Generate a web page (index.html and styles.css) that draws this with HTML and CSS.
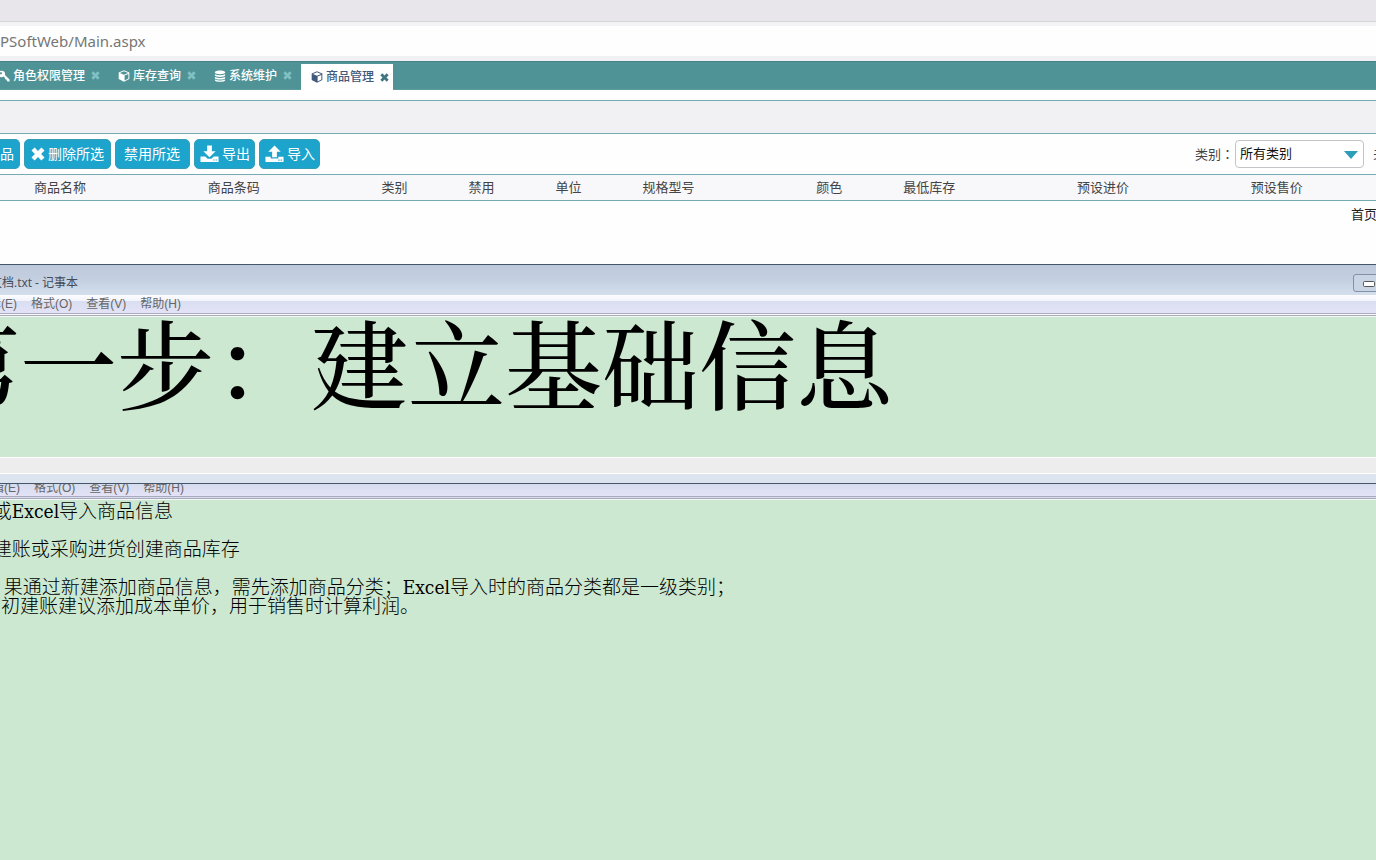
FILE: index.html
```html
<!DOCTYPE html>
<html lang="zh-CN">
<head>
<meta charset="utf-8">
<title>商品管理</title>
<link rel="stylesheet" href="styles.css">
</head>
<body>
<svg class="sprite" aria-hidden="true">
  <symbol id="cube" viewBox="0 0 14 14"><path fill-rule="evenodd" d="M7 .4 13.2 2.8V10.6L7 13.8.8 10.6V2.8ZM7 1.6 2.2 3.5 7 5.4 11.8 3.5ZM7.7 12.2 12.1 9.9V4.7L7.7 6.5Z"/></symbol>
  <symbol id="cross" viewBox="0 0 14 14"><path d="M3.6.5 7 3.9 10.4.5 13.5 3.6 10.1 7 13.5 10.4 10.4 13.5 7 10.1 3.6 13.5.5 10.4 3.9 7 .5 3.6Z"/></symbol>
</svg>

<div class="browser-strip"></div>
<div class="address-bar"><span class="address">PSoftWeb/Main.aspx</span></div>

<nav class="tabs">
  <button class="tab tab-first"><svg class="tab-icon" viewBox="0 0 14 14"><path fill-rule="evenodd" d="M4.5.8a3.8 3.8 0 0 1 3.6 5l5.4 5.2v2.3h-2.4l-.9-1v-1.2H9L8.300 10.400V9.200L6.300 7.700A3.800 3.800 0 1 1 4.500.8ZM3.400 2.500a1.200 1.200 0 1 0 .1 0Z"/></svg>角色权限管理<svg class="tab-close"><use href="#cross"/></svg></button>
  <button class="tab"><svg class="tab-icon"><use href="#cube"/></svg>库存查询<svg class="tab-close"><use href="#cross"/></svg></button>
  <button class="tab"><svg class="tab-icon" viewBox="0 0 14 14"><path d="M1 2.500C1-.1 13-.1 13 2.500V3.300C13 5.500 1 5.500 1 3.300ZM1 5Q7 7.300 13 5V6.500C13 8.700 1 8.700 1 6.500ZM1 8.200Q7 10.500 13 8.200V9.500C13 11.700 1 11.700 1 9.500ZM1 11.200Q7 13.500 13 11.200V12C13 14.400 1 14.400 1 12Z"/></svg>系统维护<svg class="tab-close"><use href="#cross"/></svg></button>
  <button class="tab tab-active"><svg class="tab-icon"><use href="#cube"/></svg>商品管理<svg class="tab-close"><use href="#cross"/></svg></button>
</nav>

<main class="page">
  <div class="band"></div>
  <div class="toolbar">
    <button class="btn btn-cut">品</button>
    <button class="btn"><svg class="btn-x"><use href="#cross"/></svg>删除所选</button>
    <button class="btn btn-plain">禁用所选</button>
    <button class="btn btn-file"><svg class="btn-icon" viewBox="0 0 20 18"><path d="M7.500 0h5v6h4L10 12.500 3.500 6h4Z"/><path fill-rule="evenodd" d="M.5 11.500h5L8 14h4l2.500-2.500h5V17.500H.5ZM14 14.700v1.200h1.300v-1.200ZM16.500 14.700v1.200h1.300v-1.200Z"/></svg>导出</button>
    <button class="btn btn-file"><svg class="btn-icon" viewBox="0 0 20 18"><path d="M7.500 12.500h5V6.500h4L10 0 3.500 6.500h4Z"/><path fill-rule="evenodd" d="M.5 12h5.500v1.800h8V12h5.500V17.500H.5ZM14 14.900v1.200h1.300v-1.200ZM16.500 14.900v1.200h1.300v-1.200Z"/></svg>导入</button>
    <div class="filter">
      <label for="category">类别<span lang="zh-TW">：</span></label>
      <div class="select-box">
        <select id="category"><option>所有类别</option></select>
        <svg class="arrow" viewBox="0 0 14 8"><path d="M0 0h14L7 8Z"/></svg>
      </div>
      <span class="keyword">关</span>
    </div>
  </div>
  <table class="goods">
    <colgroup><col class="c-lead"><col class="c-wide"><col class="c-wide"><col class="c-slim"><col class="c-slim"><col class="c-slim"><col class="c-wide"><col class="c-slim"><col class="c-wide"><col class="c-wide"><col></colgroup>
    <thead><tr><td></td><th>商品名称</th><th>商品条码</th><th>类别</th><th>禁用</th><th>单位</th><th>规格型号</th><th>颜色</th><th>最低库存</th><th>预设进价</th><th>预设售价</th></tr></thead>
  </table>
  <div class="pager"><a href="#">首页</a></div>
</main>

<section class="notepad">
  <header class="titlebar"><span class="title">文档.txt - 记事本</span><button class="minimize" aria-label="最小化"><svg viewBox="0 0 12 6"><rect x=".5" y=".5" width="11" height="5" rx="1"/></svg></button></header>
  <nav class="menu"><button>编辑(E)</button><button>格式(O)</button><button>查看(V)</button><button>帮助(H)</button></nav>
  <textarea class="editor headline" aria-label="标题" spellcheck="false">第一步：建立基础信息</textarea>
  <div class="status"></div>
</section>

<section class="notepad notepad-notes">
  <nav class="menu menu-low"><button>编辑(E)</button><button>格式(O)</button><button>查看(V)</button><button>帮助(H)</button></nav>
  <textarea class="editor notes" aria-label="说明" spellcheck="false">  或Excel导入商品信息

  建账或采购进货创建商品库存

    果通过新建添加商品信息，需先添加商品分类；Excel导入时的商品分类都是一级类别；
期初建账建议添加成本单价，用于销售时计算利润。</textarea>
</section>
</body>
</html>
```
FILE: styles.css
```css
* { box-sizing: border-box; }

body {
  margin: 0;
  min-height: 100vh;
  display: flex;
  flex-direction: column;
  overflow: hidden;
  background: #fff;
  color: #444;
  font: 13px/18px "Liberation Sans", "Noto Sans CJK SC", sans-serif;
}

button, select, textarea { font: inherit; color: inherit; margin: 0; border: 0; padding: 0; background: none; }
button, label, th, a, .title, .keyword { white-space: nowrap; }
.sprite { display: none; }

.browser-strip { height: 22px; background: #e8e6ea; border-bottom: 1px solid #d5d4d8; }
.address-bar {
  height: 39px;
  display: flex;
  align-items: center;
  border-top: 4px solid #f3f2f5;
  border-bottom: 5px solid #f1f0f2;
  background: #fefefe;
}
.address { font: 15px/20px "Noto Sans", "Open Sans", sans-serif; color: #767676; }

.tabs {
  height: 29px;
  display: flex;
  background: #4f9397;
  border-top: 1px solid #478286;
  border-bottom: 1px solid #5f9c9f;
}
.tab {
  display: flex;
  align-items: center;
  padding: 0 8px 0 10px;
  font-size: 12px;
  font-weight: 500;
  color: #fff;
}
.tab-first { margin-left: -12px; }
.tab-icon { width: 12px; height: 12px; margin-right: 3px; fill: currentColor; }
.tab-close { width: 9px; height: 9px; margin-left: 6px; fill: #7fc0c2; }
.tab-active { margin: 2px 0 -1px 1px; padding: 0 4px 0 10px; background: #fff; color: #40587c; }
.tab-active .tab-close { fill: #41757f; }

.page { height: 174px; padding-top: 10px; background: #fefefe; }
.band { height: 33px; background: #f1f0f2; border-top: 1px solid #75acb3; }
.toolbar {
  height: 41px;
  display: flex;
  align-items: center;
  gap: 4px;
  overflow: hidden;
  border-top: 1px solid #75acb3;
}
.btn {
  display: flex;
  align-items: center;
  gap: 3px;
  height: 30px;
  padding: 0 6px;
  border: 1px solid #369db5;
  border-radius: 5px;
  background: #1da4cd;
  color: #fff;
  font-size: 14px;
}
.btn-cut { padding: 0 5px 0 0; border-left: 0; border-radius: 0 5px 5px 0; }
.btn-plain { padding: 0 9px 0 8px; }
.btn-file { padding: 0 4px 0 5px; }
.btn-x { width: 14px; height: 14px; fill: #fff; }
.btn-icon { width: 19px; height: 18px; fill: #fff; }
.filter { display: flex; align-items: center; gap: 4px; margin: 0 -10px 0 auto; }
.filter label { margin-right: -3px; }
.filter label span { font-family: "Noto Sans CJK TC", sans-serif; }
.select-box { position: relative; width: 129px; height: 28px; }
.select-box select {
  width: 100%;
  height: 100%;
  padding: 0 24px 0 4px;
  appearance: none;
  border: 1px solid #c4c4c8;
  border-radius: 4px;
  background: #fff;
  color: #111;
}
.arrow { position: absolute; right: 6px; top: 11px; width: 14px; height: 8px; fill: #2b9fb9; pointer-events: none; }
.keyword { margin-left: 5px; }

.goods {
  width: 100%;
  height: 27px;
  table-layout: fixed;
  border-collapse: separate;
  border-spacing: 0;
  border-top: 1px solid #75acb3;
  border-bottom: 1px solid #75acb3;
  background: #f8f7fa;
}
.goods th, .goods td { padding: 0; text-align: left; font-weight: 400; }
.c-lead { width: 2.47%; }
.c-wide { width: 12.63%; }
.c-slim { width: 6.32%; }
.pager { display: flex; justify-content: flex-end; padding-top: 5px; }
.pager a { margin-right: -1px; color: #222; text-decoration: none; }

.notepad { border-top: 1px solid #46566a; color: #666; font-size: 12px; }
.titlebar {
  height: 30px;
  display: flex;
  align-items: center;
  justify-content: space-between;
  padding-top: 5px;
  overflow: hidden;
  background: linear-gradient(#becadb, #c4d0e1 50%, #d3dfec);
  color: #444b55;
}
.title { margin-left: -10px; font-family: "Open Sans", "Noto Sans CJK SC", sans-serif; }
.minimize {
  width: 32px;
  height: 18px;
  margin-right: -9px;
  border: 1px solid #8291a8;
  border-radius: 3px;
  background: #c9d4e4;
}
.minimize svg { display: block; width: 12px; height: 6px; margin: 3px auto 0; fill: #fff; stroke: #555; }
.menu {
  height: 21px;
  display: flex;
  gap: 14px;
  align-items: flex-start;
  overflow: hidden;
  border-bottom: 3px double #a9aabc;
  background: linear-gradient(#fdfdff, #f2f3fb 32%, #d9dff0 36%, #e4e2f6);
}
.menu button:first-child { margin-left: -23px; }

.editor {
  display: block;
  width: 100%;
  resize: none;
  overflow: hidden;
  white-space: pre;
  outline: 0;
  border-top: 1px solid #f3f8f4;
  background: #cde8d0;
  color: #000;
}
.headline {
  height: 141px;
  text-indent: -77px;
  font: 500 97px/86px "SimSun", "Noto Serif CJK SC", "Noto Sans CJK SC", serif;
}
.status { height: 26px; border-top: 1px solid #fff; border-bottom: 9px solid #dce4f0; background: #ededee; box-shadow: inset 0 -1px #fff; }

.notepad-notes { flex: 1; display: flex; flex-direction: column; }
.menu-low { height: 15px; padding-left: 3px; background: linear-gradient(#d5dcee, #e4e2f6); }
.menu-low button { line-height: 9px; }
.notes {
  flex: 1;
  width: auto;
  margin-left: -18px;
  padding-top: 2px;
  font: 300 19px/19px "DejaVu Serif Condensed", "Noto Sans CJK SC", serif;
}
```
